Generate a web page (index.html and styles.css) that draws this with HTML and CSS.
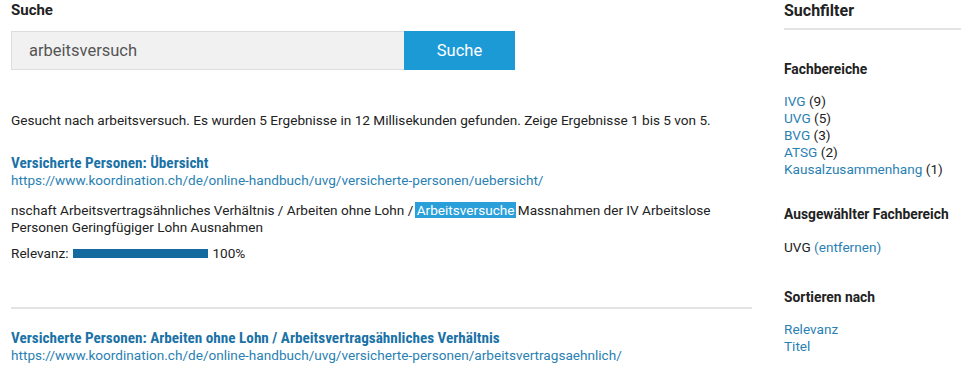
FILE: index.html
```html
<!DOCTYPE html>
<html lang="de">
<head>
  <meta charset="UTF-8">
  <meta name="viewport" content="width=device-width, initial-scale=1.0">
  <title>Suche</title>
  <link rel="stylesheet" href="styles.css">
</head>
<body>
  <div class="page">
    <main class="main">
      <h2 class="title">Suche</h2>
      <form class="search-form">
        <input type="text" class="search-input" value="arbeitsversuch">
        <button type="button" class="search-btn">Suche</button>
      </form>

      <p class="summary">Gesucht nach arbeitsversuch. Es wurden 5 Ergebnisse in 12 Millisekunden gefunden. Zeige Ergebnisse 1 bis 5 von 5.</p>

      <div class="result">
        <a class="result-title" href="#">Versicherte Personen: Übersicht</a>
        <a class="result-url" href="#">https://www.koordination.ch/de/online-handbuch/uvg/versicherte-personen/uebersicht/</a>
        <p class="snippet">nschaft Arbeitsvertragsähnliches Verhältnis / Arbeiten ohne Lohn / <span class="hit">Arbeitsversuche</span> Massnahmen der IV Arbeitslose Personen Geringfügiger Lohn Ausnahmen</p>
        <div class="relevance">
          Relevanz:
          <span class="bar"><span class="bar-fill" style="width: 100%"></span></span>
          100%
        </div>
      </div>

      <div class="result">
        <a class="result-title" href="#">Versicherte Personen: Arbeiten ohne Lohn / Arbeitsvertragsähnliches Verhältnis</a>
        <a class="result-url" href="#">https://www.koordination.ch/de/online-handbuch/uvg/versicherte-personen/arbeitsvertragsaehnlich/</a>
      </div>
    </main>

    <aside class="sidebar">
      <h2 class="side-title">Suchfilter</h2>

      <h3 class="side-head">Fachbereiche</h3>
      <ul class="filter-list">
        <li><a href="#">IVG</a> (9)</li>
        <li><a href="#">UVG</a> (5)</li>
        <li><a href="#">BVG</a> (3)</li>
        <li><a href="#">ATSG</a> (2)</li>
        <li><a href="#">Kausalzusammenhang</a> (1)</li>
      </ul>

      <h3 class="side-head">Ausgewählter Fachbereich</h3>
      <p class="selected">UVG <a href="#">(entfernen)</a></p>

      <h3 class="side-head">Sortieren nach</h3>
      <ul class="filter-list">
        <li><a href="#">Relevanz</a></li>
        <li><a href="#">Titel</a></li>
      </ul>
    </aside>
  </div>
</body>
</html>
```

FILE: styles.css
```css
* { box-sizing: border-box; }
body {
  font-family: Roboto, 'Liberation Sans', sans-serif;
  font-size: 13.6px;
  line-height: 17px;
  color: #222;
  margin: 0;
  background-color: #fff;
  overflow: hidden;
}
a {
  color: #2a7fb3;
  text-decoration: none;
}
.page {
  display: flex;
  gap: 32px;
  padding: 0 0 0 11px;
}
.main {
  width: 741px;
  flex-shrink: 0;
}
.title {
  font-size: 15px;
  font-weight: bold;
  margin: 1px 0 12px;
  line-height: 18px;
}
.search-form {
  display: flex;
  height: 39px;
  margin: 0;
}
.search-input {
  width: 393px;
  height: 39px;
  border: 1px solid #ddd;
  border-right: none;
  background-color: #f1f1f1;
  font-family: inherit;
  font-size: 16.5px;
  color: #555;
  padding: 0 17px;
  outline: none;
}
.search-btn {
  width: 111px;
  height: 39px;
  border: none;
  background-color: #1b9ad6;
  color: #fff;
  font-family: inherit;
  font-size: 16.5px;
  cursor: pointer;
}
.summary {
  margin: 42px 0 24px;
}
.result {
  padding-bottom: 45px;
}
.result + .result {
  border-top: 2px solid #e3e3e3;
  padding-top: 19px;
}
.result-title {
  display: block;
  font-family: 'Roboto Condensed', Roboto, sans-serif;
  font-size: 15.2px;
  font-weight: bold;
  color: #1b72a6;
  line-height: 18px;
  padding-top: 1px;
}
.result-url {
  display: block;
  line-height: 17px;
}
.snippet {
  margin: 13px 0 9px;
}
.hit {
  background-color: #2a9fd9;
  color: #fff;
  box-shadow: 2px 0 0 #2a9fd9, -2px 0 0 #2a9fd9;
}
.relevance {
  display: flex;
  align-items: center;
  gap: 4px;
}
.bar {
  display: block;
  width: 135px;
  height: 9px;
  margin-left: 1px;
}
.bar-fill {
  display: block;
  height: 100%;
  background-color: #146a9e;
}
.sidebar {
  flex: 1;
}
.side-title {
  font-size: 16px;
  font-weight: bold;
  line-height: 18px;
  margin: 2px 0 0;
  padding-bottom: 8px;
  border-bottom: 2px solid #e3e3e3;
}
.side-head {
  font-size: 13.8px;
  font-weight: bold;
  margin: 28px 0 16px;
}
.sidebar .side-title + .side-head {
  margin-top: 31px;
}
.sidebar .side-head + .filter-list {
  margin-top: -1px;
}
.filter-list {
  list-style: none;
  margin: 0;
  padding: 0;
}
.selected {
  margin: 0;
  padding-bottom: 5px;
}
```
